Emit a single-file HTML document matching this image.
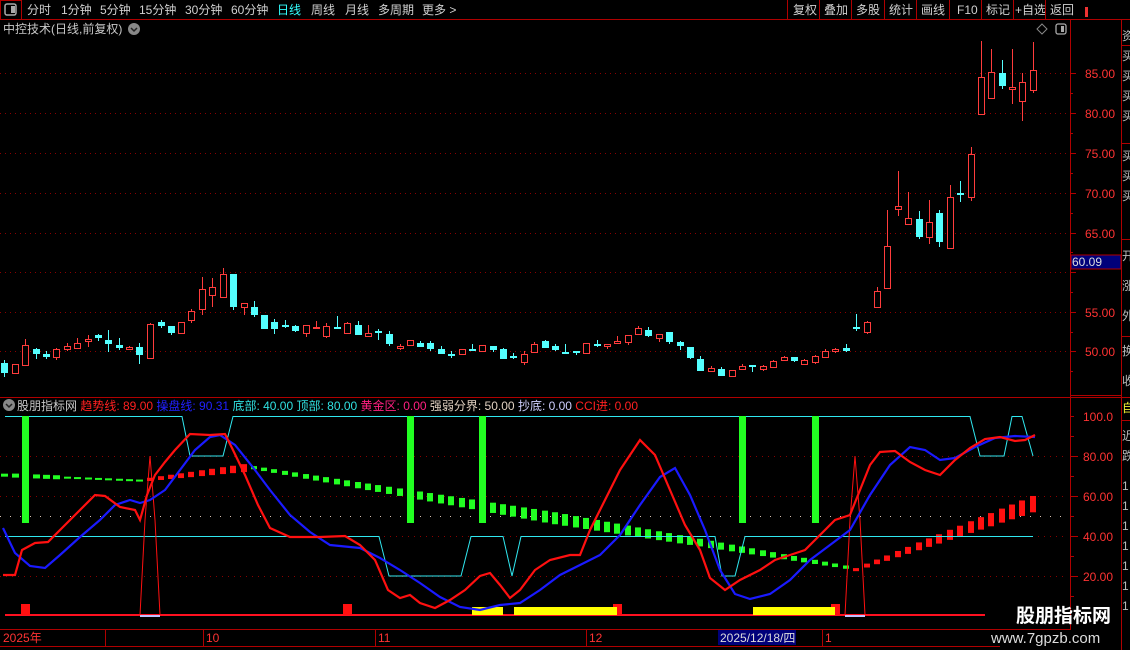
<!DOCTYPE html>
<html><head><meta charset="utf-8"><style>
html,body{margin:0;padding:0;background:#000;width:1130px;height:650px;overflow:hidden}
svg{display:block}
text{font-family:"Liberation Sans","Noto Sans CJK SC",sans-serif}
</style></head><body>
<svg id="s" width="1130" height="650" viewBox="0 0 1130 650" xmlns="http://www.w3.org/2000/svg">
<rect width="1130" height="650" fill="#000"/>
<!-- toolbar -->
<line x1="0" y1="19.5" x2="1130" y2="19.5" stroke="#b00000"/>
<rect x="0.5" y="0.5" width="21" height="19" fill="none" stroke="#b00000"/>
<rect x="5" y="4" width="11" height="11" rx="2" fill="none" stroke="#aaa" stroke-width="1.5"/>
<rect x="11" y="6" width="4" height="7" fill="#aaa"/>
<g font-size="12" fill="#d0d0d0">
<text x="27" y="14">分时</text><text x="61" y="14">1分钟</text><text x="100" y="14">5分钟</text><text x="139" y="14">15分钟</text><text x="185" y="14">30分钟</text><text x="231" y="14">60分钟</text>
<text x="277" y="14" fill="#3ff">日线</text><text x="311" y="14">周线</text><text x="345" y="14">月线</text><text x="378" y="14">多周期</text><text x="422" y="14">更多 &gt;</text>
<text x="793" y="14">复权</text><text x="824" y="14">叠加</text><text x="856" y="14">多股</text><text x="889" y="14">统计</text><text x="921" y="14">画线</text><text x="957" y="14">F10</text><text x="986" y="14">标记</text><text x="1015" y="14">+自选</text><text x="1050" y="14">返回</text>
</g>
<g stroke="#b00000"><line x1="787.5" y1="0" x2="787.5" y2="19"/><line x1="819.5" y1="0" x2="819.5" y2="19"/><line x1="851.5" y1="0" x2="851.5" y2="19"/><line x1="884.5" y1="0" x2="884.5" y2="19"/><line x1="916.5" y1="0" x2="916.5" y2="19"/><line x1="949.5" y1="0" x2="949.5" y2="19"/><line x1="981.5" y1="0" x2="981.5" y2="19"/><line x1="1013.5" y1="0" x2="1013.5" y2="19"/><line x1="1045.5" y1="0" x2="1045.5" y2="19"/></g>
<rect x="1085" y="7" width="3" height="10" fill="#e33"/>
<!-- title -->
<text x="3" y="33" font-size="12" fill="#c8c8c8">中控技术(日线,前复权)</text>
<circle cx="134" cy="29" r="6" fill="#888"/><path d="M131 28l3 3 3-3" stroke="#222" stroke-width="1.5" fill="none"/>
<path d="M1042 24l5 5-5 5-5-5z" fill="none" stroke="#888"/>
<rect x="1056" y="24" width="10" height="10" rx="2" fill="none" stroke="#aaa" stroke-width="1.3"/><rect x="1061" y="26" width="3" height="6" fill="#aaa"/>
<!-- axis -->
<line x1="1070.5" y1="20" x2="1070.5" y2="630" stroke="#b00000"/>
<line x1="1121.5" y1="20" x2="1121.5" y2="650" stroke="#b00000"/>
<line x1="0" y1="397.5" x2="1130" y2="397.5" stroke="#b00000"/>
<line x1="1070" y1="395.5" x2="1121" y2="395.5" stroke="#b00000"/>
<g id="topgrid"></g>
<g font-size="12" fill="#ff3333">
<text x="1085" y="78">85.00</text><text x="1085" y="118">80.00</text><text x="1085" y="158">75.00</text><text x="1085" y="198">70.00</text><text x="1085" y="238">65.00</text><text x="1085" y="317">55.00</text><text x="1085" y="356">50.00</text>
<text x="1083" y="421">100.0</text><text x="1083" y="461">80.00</text><text x="1083" y="501">60.00</text><text x="1083" y="541">40.00</text><text x="1083" y="581">20.00</text>
</g>
<rect x="1071" y="255" width="50" height="14" fill="#00007a"/><rect x="1071" y="255" width="50" height="14" fill="none" stroke="#b00000"/>
<text x="1072" y="266" font-size="12" fill="#ddd">60.09</text>
<!-- right panel -->
<g stroke="#b00000"><line x1="1121" y1="45.5" x2="1130" y2="45.5"/><line x1="1121" y1="143.5" x2="1130" y2="143.5"/><line x1="1121" y1="239.5" x2="1130" y2="239.5"/><line x1="1121" y1="336.5" x2="1130" y2="336.5"/><line x1="1121" y1="420.5" x2="1130" y2="420.5"/></g>
<g font-size="12" fill="#bbb"><text x="1122" y="40">资</text><text x="1122" y="60">买</text><text x="1122" y="80">买</text><text x="1122" y="100">买</text><text x="1122" y="120">买</text><text x="1122" y="160">买</text><text x="1122" y="180">买</text><text x="1122" y="200">买</text><text x="1122" y="260">开</text><text x="1122" y="290">涨</text><text x="1122" y="320">外</text><text x="1122" y="355">换</text><text x="1122" y="385">收</text><text x="1122" y="412" fill="#ee3">自</text><text x="1122" y="440">近</text><text x="1122" y="460">跌</text>
<text x="1122" y="490">1</text><text x="1122" y="510">1</text><text x="1122" y="530">1</text><text x="1122" y="550">1</text><text x="1122" y="570">1</text><text x="1122" y="590">1</text><text x="1122" y="610">1</text></g>
<g id="candles"></g>
<!-- indicator header -->
<circle cx="9" cy="405" r="6" fill="#888"/><path d="M6 404l3 3 3-3" stroke="#222" stroke-width="1.5" fill="none"/>
<text x="17" y="410" font-size="12"><tspan fill="#c8c8c8">股朋指标网 </tspan><tspan fill="#ff2020">趋势线: 89.00 </tspan><tspan fill="#2020ff">操盘线: 90.31 </tspan><tspan fill="#30e0e0">底部: 40.00 </tspan><tspan fill="#30e0e0">顶部: 80.00 </tspan><tspan fill="#ff2080">黄金区: 0.00 </tspan><tspan fill="#e0d0c0">强弱分界: 50.00 </tspan><tspan fill="#d0d0ff">抄底: 0.00 </tspan><tspan fill="#ff2020">CCI进: 0.00</tspan></text>
<g id="ind"></g>
<!-- time axis -->
<line x1="0" y1="629.5" x2="1070" y2="629.5" stroke="#b00000"/>
<line x1="0" y1="646.5" x2="1000" y2="646.5" stroke="#b00000"/>
<g stroke="#b00000"><line x1="105.5" y1="630" x2="105.5" y2="646"/><line x1="203.5" y1="630" x2="203.5" y2="646"/><line x1="375.5" y1="630" x2="375.5" y2="646"/><line x1="586.5" y1="630" x2="586.5" y2="646"/><line x1="822.5" y1="630" x2="822.5" y2="646"/></g>
<g font-size="12" fill="#ff3333"><text x="3" y="642">2025年</text><text x="206" y="642">10</text><text x="378" y="642">11</text><text x="589" y="642">12</text><text x="825" y="642">1</text></g>
<rect x="718" y="630" width="78" height="15" fill="#00007a"/>
<text x="720" y="642" font-size="12" fill="#ddd">2025/12/18/四</text>
<!-- watermark -->
<text x="1016" y="622" font-size="19" font-weight="bold" fill="#fff">股朋指标网</text>
<text x="991" y="643" font-size="15" fill="#ddd">www.7gpzb.com</text>
</svg>
<script>
var NS="http://www.w3.org/2000/svg";
function el(p,t,a){var e=document.createElementNS(NS,t);for(var k in a)e.setAttribute(k,a[k]);p.appendChild(e);return e;}
var tg=document.getElementById('topgrid');
[73,113,153,193,233,272,312,351].forEach(function(y){el(tg,'line',{x1:0,y1:y+.5,x2:1068,y2:y+.5,stroke:'#8a0000','stroke-dasharray':'1 4'});el(tg,'line',{x1:1070,y1:y+.5,x2:1076,y2:y+.5,stroke:'#b00000'});});
[93,133,173,213,252,292,332,371].forEach(function(y){el(tg,'line',{x1:1070,y1:y+.5,x2:1073,y2:y+.5,stroke:'#b00000'});});
var C=[
[4,'c',363,373,360,377],[15,'r',364,373,364,374],[25,'r',345,365,339,365],[36,'c',349,354,348,359],[46,'c',354,357,351,359],[56,'r',349,357,348,360],[67,'r',346,349,343,351],[77,'r',343,348,338,348],[88,'r',339,341,335,347],[98,'c',335,338,334,341],
[108,'c',340,344,330,352],[119,'c',345,348,338,350],[129,'r',347,349,346,350],[139,'c',347,355,343,364],[150,'r',324,358,323,358],[161,'c',322,326,320,328],[171,'c',326,333,326,335],[181,'r',322,333,322,333],[191,'r',311,320,309,323],[202,'r',289,309,277,315],
[212,'r',287,295,278,307],[223,'r',274,297,268,297],[233,'c',274,307,274,310],[244,'r',303,307,303,315],[254,'c',307,315,301,317],[264,'c',315,329,315,329],[274,'c',322,329,319,334],[285,'c',325,326,320,328],[295,'c',326,331,325,332],[306,'r',325,333,325,337],
[316,'r',327,328,321,328],[326,'r',326,336,323,338],[337,'c',327,328,316,328],[347,'r',323,333,322,333],[358,'c',325,335,321,335],[368,'r',333,336,325,336],[378,'c',331,333,329,340],[389,'c',334,344,331,346],[400,'r',346,348,344,350],[410,'r',340,345,340,346],
[420,'c',343,347,341,347],[430,'c',343,349,341,351],[441,'c',349,354,346,354],[451,'c',354,355,351,358],[462,'r',349,354,349,355],[472,'c',349,350,344,351],[482,'r',345,351,345,352],[493,'c',346,350,346,352],[503,'c',349,359,348,359],[513,'c',356,357,353,359],
[524,'r',354,362,351,365],[534,'r',344,352,342,352],[545,'c',341,348,340,348],[555,'c',346,350,344,351],[565,'c',352,353,344,354],[576,'c',351,352,351,355],[586,'r',343,353,343,354],[597,'c',344,346,340,347],[607,'r',344,346,344,349],[617,'r',341,343,336,343],
[628,'r',335,342,335,345],[638,'r',328,334,326,335],[648,'c',330,336,327,337],[659,'r',334,338,334,342],[669,'c',332,342,332,344],[680,'c',342,346,341,350],[690,'c',347,358,347,359],[700,'c',359,371,356,371],[711,'r',368,371,366,371],[721,'c',369,376,367,376],
[732,'r',370,376,370,376],[742,'r',366,369,364,369],[752,'c',365,367,365,372],[763,'r',366,369,365,371],[773,'r',361,367,360,367],[784,'r',357,360,356,360],[794,'c',357,361,357,362],[804,'r',360,364,359,365],[815,'r',356,362,355,364],[825,'r',351,357,349,358],
[835,'r',349,351,348,353],[846,'c',348,351,344,352],[856,'c',327,329,314,331],[867,'r',322,332,321,334],[877,'r',291,307,287,307],[887,'r',246,288,210,288],[898,'r',206,209,171,216],[908,'r',218,224,192,224],[919,'c',219,237,211,239],[929,'r',222,237,200,244],
[939,'c',213,242,210,247],[950,'r',197,248,185,248],[960,'c',193,195,181,202],[971,'r',154,197,147,201],[981,'r',77,114,41,114],[991,'r',72,98,49,98],[1002,'c',73,86,60,89],[1012,'r',87,89,49,104],[1022,'r',82,101,73,121],[1033,'r',70,90,42,93]];
var cg=document.getElementById('candles');
C.forEach(function(c){var x=c[0],col=c[1]=='r'?'#ff3c3c':'#54ffff';
el(cg,'line',{x1:x+.5,y1:c[4],x2:x+.5,y2:c[5],stroke:col});
var h=Math.max(1,c[3]-c[2]);
if(c[1]=='r'){ if(h<2) el(cg,'rect',{x:x-3,y:c[2],width:7,height:2,fill:col}); else el(cg,'rect',{x:x-3+.5,y:c[2]+.5,width:6,height:h,fill:'#000',stroke:col});}
else el(cg,'rect',{x:x-3,y:c[2],width:7,height:Math.max(2,h),fill:col});
});
var ig=document.getElementById('ind');
// grid
[456,496,536,576].forEach(function(y){el(ig,'line',{x1:0,y1:y+.5,x2:1068,y2:y+.5,stroke:'#8a0000','stroke-dasharray':'1 5'});el(ig,'line',{x1:1070,y1:y+.5,x2:1078,y2:y+.5,stroke:'#b00000'});});
[416,436,476,516,556,596].forEach(function(y){el(ig,'line',{x1:1070,y1:y+.5,x2:1074,y2:y+.5,stroke:'#b00000'});});
el(ig,'line',{x1:0,y1:516.5,x2:1068,y2:516.5,stroke:'#d8c0b0','stroke-dasharray':'1 9'});
// slow dotted line
for(var i=0;i<C.length;i++){var x=C[i][0],y,h,col;
 if(x<145){y=475+x*0.04;h=x<10?3:(x<60?4:2);col='#22ff22';}
 else if(x<250){y=480-(x-145)*0.12;h=3+(x-145)*0.05;col='#ff1010';}
 else if(x<855){y=467+(x-250)*0.168;var d=Math.min(x-250,855-x);h=3+d*0.03;col='#22ff22';}
 else {y=570-(x-855)*0.37;h=3+(x-855)*0.075;col='#ff1010';}
 if(x<145&&i%1==0){el(ig,'rect',{x:x-3,y:y-h/2,width:7,height:h,fill:col});}
 else el(ig,'rect',{x:x-3,y:y-h/2,width:6,height:h,fill:col});
}
// cyan
el(ig,'polyline',{points:'5,416.5 182,416.5 190,456 223,456 233,416.5 970,416.5 980,456 1004,456 1012,416.5 1022,416.5 1033,456',fill:'none',stroke:'#30e8f0','stroke-width':1});
el(ig,'polyline',{points:'5,536.5 379,536.5 389,576 461,576 471,536.5 503,536.5 512,576 521,536.5 715,536.5 722,576 735,576 745,536.5 1033,536.5',fill:'none',stroke:'#30e8f0','stroke-width':1});
// green bars
[22,407,479,739,812].forEach(function(x){el(ig,'rect',{x:x,y:416,width:7,height:107,fill:'#22ff22'});});
// baseline
el(ig,'line',{x1:5,y1:615,x2:985,y2:615,stroke:'#ff1020','stroke-width':2});
el(ig,'rect',{x:140,y:615,width:20,height:2,fill:'#c0c0ff'});el(ig,'rect',{x:845,y:615,width:20,height:2,fill:'#c0c0ff'});
[[21,604],[343,604],[613,604],[831,604]].forEach(function(p){el(ig,'rect',{x:p[0],y:p[1],width:9,height:11,fill:'#ff1010'});});
[[472,503],[514,617],[753,835]].forEach(function(p){el(ig,'rect',{x:p[0],y:607,width:p[1]-p[0],height:8,fill:'#ffff00'});});
// spikes
el(ig,'polyline',{points:'140,615 145,520 150,456 155,520 160,615',fill:'none',stroke:'#ff1010'});
el(ig,'polyline',{points:'845,615 850,520 855,456 860,520 865,615',fill:'none',stroke:'#ff1010'});
// blue
el(ig,'polyline',{points:'3,528 15,553 30,566 45,568 60,555 80,537 100,520 115,505 130,500 140,503 150,500 165,490 180,470 195,450 210,437 220,435 235,445 255,470 270,490 290,515 310,532 330,545 360,548 380,558 400,570 420,583 440,597 460,607 480,610 500,605 520,603 540,590 560,575 580,565 600,555 620,535 640,505 660,477 675,468 690,495 705,530 720,570 735,594 750,599 770,594 790,580 810,560 830,545 850,530 870,495 890,465 910,447 925,450 940,460 955,458 975,447 995,438 1015,436 1035,437',fill:'none',stroke:'#1a1aff','stroke-width':2.2});
// red
el(ig,'polyline',{points:'3,575 15,575 22,550 35,543 48,542 60,530 80,510 95,495 105,496 120,507 135,510 140,520 147,495 155,475 165,462 175,450 190,434 210,435 225,434 232,448 245,475 258,505 270,528 290,537 320,537 345,536 360,545 375,560 388,590 400,598 410,595 420,603 435,608 450,600 465,590 480,576 490,573 500,585 510,598 520,590 535,570 550,560 570,555 580,555 590,530 605,500 620,470 640,440 655,455 670,490 685,525 700,550 710,578 725,590 740,580 760,570 775,560 790,555 805,550 820,535 835,520 850,515 860,490 870,465 880,452 895,451 910,462 925,470 940,475 955,460 970,448 985,439 1000,437 1015,441 1025,440 1035,435',fill:'none',stroke:'#ff1010','stroke-width':2.2});
</script>
</body></html>
